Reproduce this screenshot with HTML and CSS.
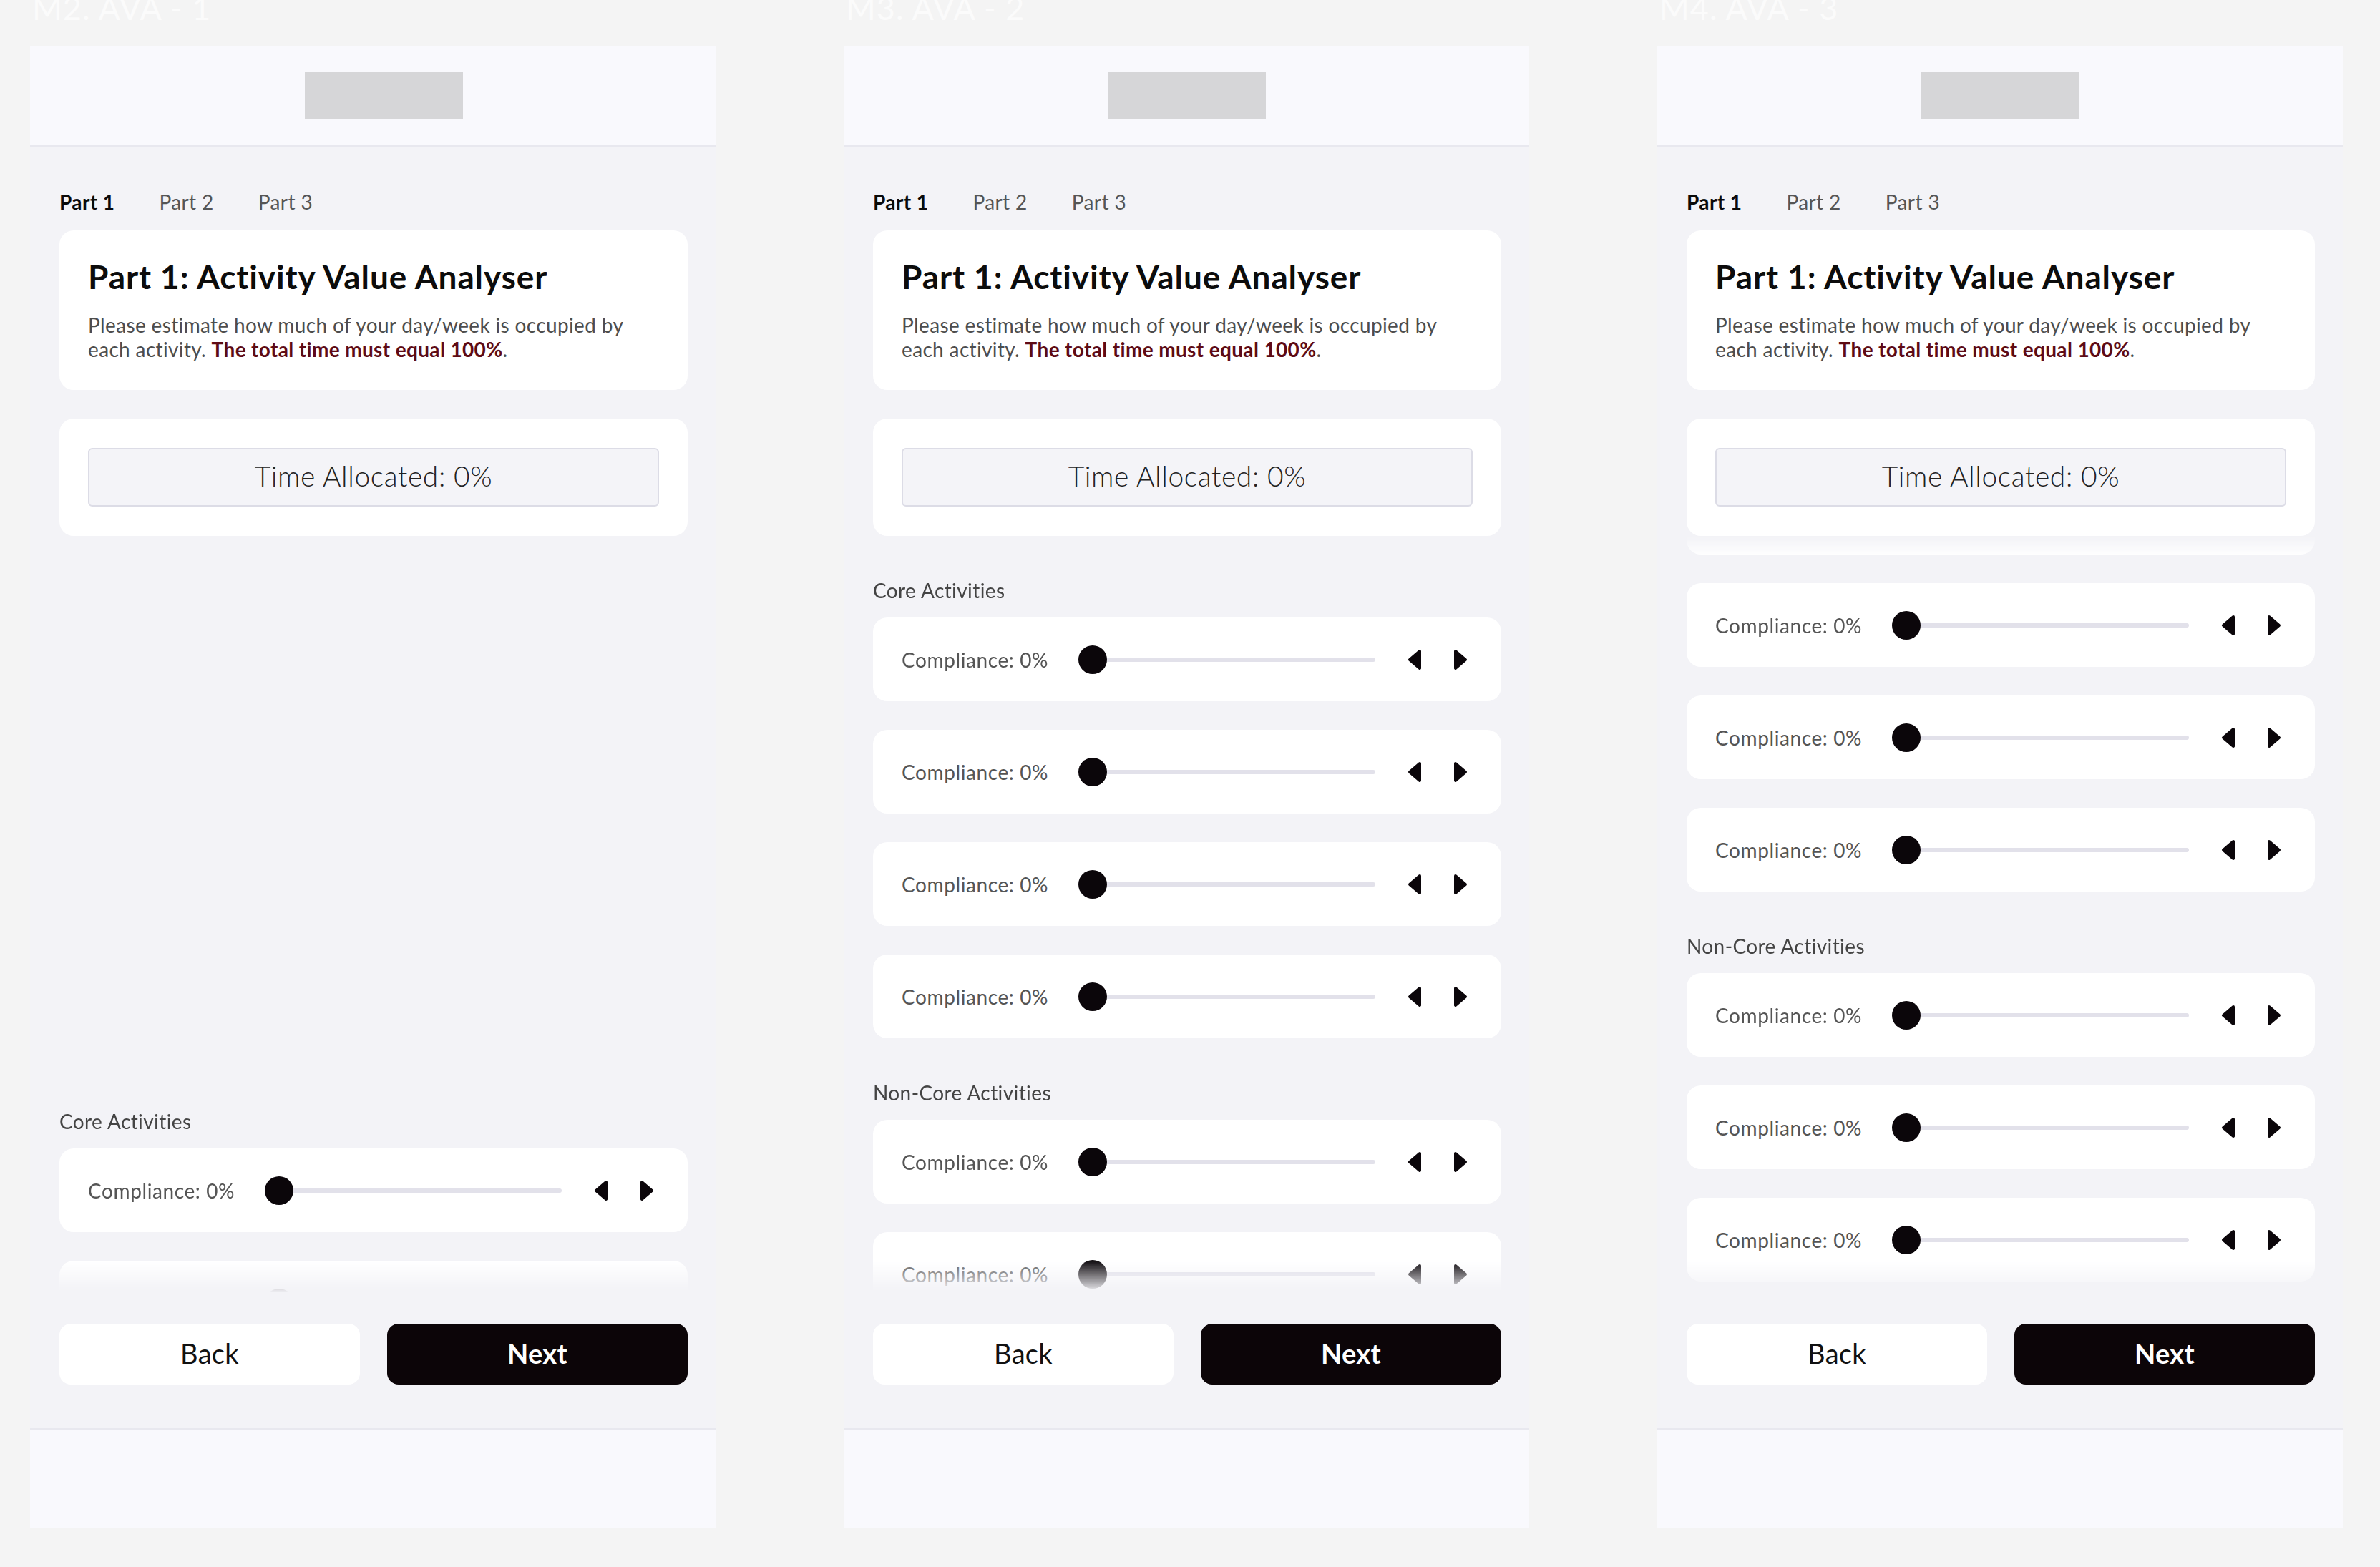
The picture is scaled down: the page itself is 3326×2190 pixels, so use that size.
FILE: index.html
```html
<!DOCTYPE html>
<html lang="en">
<head>
<meta charset="utf-8">
<title>Activity Value Analyser</title>
<link rel="stylesheet" href="styles.css">
</head>
<body>
<div class="board">

  <section class="artboard">
    <h2 class="artboard-title">M2. AVA - 1</h2>
    <div class="frame">
      <header class="frame-header is-offset"><div class="logo-placeholder"></div></header>
      <main class="frame-body">
        <nav class="tabs"><span class="tab is-active">Part 1</span><span class="tab">Part 2</span><span class="tab">Part 3</span></nav>
        <div class="card intro-card">
          <h1 class="card-title">Part 1: Activity Value Analyser</h1>
          <p class="card-desc">Please estimate how much of your day/week is occupied by each activity. <strong class="warn">The total time must equal 100%</strong>.</p>
        </div>
        <div class="card alloc-card"><div class="alloc">Time Allocated: 0%</div></div>
        <div class="list">
          <div class="list-inner is-entering">
            <div class="section">
              <div class="section-label">Core Activities</div>
              <div class="rows">
                <div class="row"><span class="row-label">Compliance: 0%</span><div class="slider"><div class="track"></div><div class="thumb"></div></div><div class="steppers"><button class="step"><svg viewBox="0 0 24 32"><path d="M19 4 L5 16 L19 28 Z"/></svg></button><button class="step"><svg viewBox="0 0 24 32"><path d="M5 4 L19 16 L5 28 Z"/></svg></button></div></div>
                <div class="row"><span class="row-label">Compliance: 0%</span><div class="slider"><div class="track"></div><div class="thumb"></div></div><div class="steppers"><button class="step"><svg viewBox="0 0 24 32"><path d="M19 4 L5 16 L19 28 Z"/></svg></button><button class="step"><svg viewBox="0 0 24 32"><path d="M5 4 L19 16 L5 28 Z"/></svg></button></div></div>
                <div class="row"><span class="row-label">Compliance: 0%</span><div class="slider"><div class="track"></div><div class="thumb"></div></div><div class="steppers"><button class="step"><svg viewBox="0 0 24 32"><path d="M19 4 L5 16 L19 28 Z"/></svg></button><button class="step"><svg viewBox="0 0 24 32"><path d="M5 4 L19 16 L5 28 Z"/></svg></button></div></div>
                <div class="row"><span class="row-label">Compliance: 0%</span><div class="slider"><div class="track"></div><div class="thumb"></div></div><div class="steppers"><button class="step"><svg viewBox="0 0 24 32"><path d="M19 4 L5 16 L19 28 Z"/></svg></button><button class="step"><svg viewBox="0 0 24 32"><path d="M5 4 L19 16 L5 28 Z"/></svg></button></div></div>
              </div>
            </div>
          </div>
        </div>
        <div class="actions"><button class="btn btn-back">Back</button><button class="btn btn-next">Next</button></div>
      </main>
      <footer class="frame-footer"></footer>
    </div>
  </section>

  <section class="artboard">
    <h2 class="artboard-title">M3. AVA - 2</h2>
    <div class="frame">
      <header class="frame-header"><div class="logo-placeholder"></div></header>
      <main class="frame-body">
        <nav class="tabs"><span class="tab is-active">Part 1</span><span class="tab">Part 2</span><span class="tab">Part 3</span></nav>
        <div class="card intro-card">
          <h1 class="card-title">Part 1: Activity Value Analyser</h1>
          <p class="card-desc">Please estimate how much of your day/week is occupied by each activity. <strong class="warn">The total time must equal 100%</strong>.</p>
        </div>
        <div class="card alloc-card"><div class="alloc">Time Allocated: 0%</div></div>
        <div class="list">
          <div class="list-inner">
            <div class="section">
              <div class="section-label">Core Activities</div>
              <div class="rows">
                <div class="row"><span class="row-label">Compliance: 0%</span><div class="slider"><div class="track"></div><div class="thumb"></div></div><div class="steppers"><button class="step"><svg viewBox="0 0 24 32"><path d="M19 4 L5 16 L19 28 Z"/></svg></button><button class="step"><svg viewBox="0 0 24 32"><path d="M5 4 L19 16 L5 28 Z"/></svg></button></div></div>
                <div class="row"><span class="row-label">Compliance: 0%</span><div class="slider"><div class="track"></div><div class="thumb"></div></div><div class="steppers"><button class="step"><svg viewBox="0 0 24 32"><path d="M19 4 L5 16 L19 28 Z"/></svg></button><button class="step"><svg viewBox="0 0 24 32"><path d="M5 4 L19 16 L5 28 Z"/></svg></button></div></div>
                <div class="row"><span class="row-label">Compliance: 0%</span><div class="slider"><div class="track"></div><div class="thumb"></div></div><div class="steppers"><button class="step"><svg viewBox="0 0 24 32"><path d="M19 4 L5 16 L19 28 Z"/></svg></button><button class="step"><svg viewBox="0 0 24 32"><path d="M5 4 L19 16 L5 28 Z"/></svg></button></div></div>
                <div class="row"><span class="row-label">Compliance: 0%</span><div class="slider"><div class="track"></div><div class="thumb"></div></div><div class="steppers"><button class="step"><svg viewBox="0 0 24 32"><path d="M19 4 L5 16 L19 28 Z"/></svg></button><button class="step"><svg viewBox="0 0 24 32"><path d="M5 4 L19 16 L5 28 Z"/></svg></button></div></div>
              </div>
            </div>
            <div class="section">
              <div class="section-label">Non-Core Activities</div>
              <div class="rows">
                <div class="row"><span class="row-label">Compliance: 0%</span><div class="slider"><div class="track"></div><div class="thumb"></div></div><div class="steppers"><button class="step"><svg viewBox="0 0 24 32"><path d="M19 4 L5 16 L19 28 Z"/></svg></button><button class="step"><svg viewBox="0 0 24 32"><path d="M5 4 L19 16 L5 28 Z"/></svg></button></div></div>
                <div class="row"><span class="row-label">Compliance: 0%</span><div class="slider"><div class="track"></div><div class="thumb"></div></div><div class="steppers"><button class="step"><svg viewBox="0 0 24 32"><path d="M19 4 L5 16 L19 28 Z"/></svg></button><button class="step"><svg viewBox="0 0 24 32"><path d="M5 4 L19 16 L5 28 Z"/></svg></button></div></div>
                <div class="row"><span class="row-label">Compliance: 0%</span><div class="slider"><div class="track"></div><div class="thumb"></div></div><div class="steppers"><button class="step"><svg viewBox="0 0 24 32"><path d="M19 4 L5 16 L19 28 Z"/></svg></button><button class="step"><svg viewBox="0 0 24 32"><path d="M5 4 L19 16 L5 28 Z"/></svg></button></div></div>
              </div>
            </div>
          </div>
        </div>
        <div class="actions"><button class="btn btn-back">Back</button><button class="btn btn-next">Next</button></div>
      </main>
      <footer class="frame-footer"></footer>
    </div>
  </section>

  <section class="artboard">
    <h2 class="artboard-title">M4. AVA - 3</h2>
    <div class="frame">
      <header class="frame-header"><div class="logo-placeholder"></div></header>
      <main class="frame-body">
        <nav class="tabs"><span class="tab is-active">Part 1</span><span class="tab">Part 2</span><span class="tab">Part 3</span></nav>
        <div class="card intro-card">
          <h1 class="card-title">Part 1: Activity Value Analyser</h1>
          <p class="card-desc">Please estimate how much of your day/week is occupied by each activity. <strong class="warn">The total time must equal 100%</strong>.</p>
        </div>
        <div class="card alloc-card"><div class="alloc">Time Allocated: 0%</div></div>
        <div class="list">
          <div class="list-inner is-scrolled">
            <div class="section">
              <div class="section-label">Core Activities</div>
              <div class="rows">
                <div class="row"><span class="row-label">Compliance: 0%</span><div class="slider"><div class="track"></div><div class="thumb"></div></div><div class="steppers"><button class="step"><svg viewBox="0 0 24 32"><path d="M19 4 L5 16 L19 28 Z"/></svg></button><button class="step"><svg viewBox="0 0 24 32"><path d="M5 4 L19 16 L5 28 Z"/></svg></button></div></div>
                <div class="row"><span class="row-label">Compliance: 0%</span><div class="slider"><div class="track"></div><div class="thumb"></div></div><div class="steppers"><button class="step"><svg viewBox="0 0 24 32"><path d="M19 4 L5 16 L19 28 Z"/></svg></button><button class="step"><svg viewBox="0 0 24 32"><path d="M5 4 L19 16 L5 28 Z"/></svg></button></div></div>
                <div class="row"><span class="row-label">Compliance: 0%</span><div class="slider"><div class="track"></div><div class="thumb"></div></div><div class="steppers"><button class="step"><svg viewBox="0 0 24 32"><path d="M19 4 L5 16 L19 28 Z"/></svg></button><button class="step"><svg viewBox="0 0 24 32"><path d="M5 4 L19 16 L5 28 Z"/></svg></button></div></div>
                <div class="row"><span class="row-label">Compliance: 0%</span><div class="slider"><div class="track"></div><div class="thumb"></div></div><div class="steppers"><button class="step"><svg viewBox="0 0 24 32"><path d="M19 4 L5 16 L19 28 Z"/></svg></button><button class="step"><svg viewBox="0 0 24 32"><path d="M5 4 L19 16 L5 28 Z"/></svg></button></div></div>
              </div>
            </div>
            <div class="section">
              <div class="section-label">Non-Core Activities</div>
              <div class="rows">
                <div class="row"><span class="row-label">Compliance: 0%</span><div class="slider"><div class="track"></div><div class="thumb"></div></div><div class="steppers"><button class="step"><svg viewBox="0 0 24 32"><path d="M19 4 L5 16 L19 28 Z"/></svg></button><button class="step"><svg viewBox="0 0 24 32"><path d="M5 4 L19 16 L5 28 Z"/></svg></button></div></div>
                <div class="row"><span class="row-label">Compliance: 0%</span><div class="slider"><div class="track"></div><div class="thumb"></div></div><div class="steppers"><button class="step"><svg viewBox="0 0 24 32"><path d="M19 4 L5 16 L19 28 Z"/></svg></button><button class="step"><svg viewBox="0 0 24 32"><path d="M5 4 L19 16 L5 28 Z"/></svg></button></div></div>
                <div class="row"><span class="row-label">Compliance: 0%</span><div class="slider"><div class="track"></div><div class="thumb"></div></div><div class="steppers"><button class="step"><svg viewBox="0 0 24 32"><path d="M19 4 L5 16 L19 28 Z"/></svg></button><button class="step"><svg viewBox="0 0 24 32"><path d="M5 4 L19 16 L5 28 Z"/></svg></button></div></div>
              </div>
            </div>
          </div>
        </div>
        <div class="actions"><button class="btn btn-back">Back</button><button class="btn btn-next">Next</button></div>
      </main>
      <footer class="frame-footer"></footer>
    </div>
  </section>

</div>
</body>
</html>
```

FILE: styles.css
```css
* { box-sizing: border-box; }

html, body {
  margin: 0;
  padding: 0;
}

body {
  background: #f4f4f4;
  font-family: Lato, "Liberation Sans", sans-serif;
  width: 3326px;
  height: 2190px;
  overflow: hidden;
}

.board {
  display: flex;
  gap: 179px;
  padding-left: 42px;
}

.artboard {
  width: 958px;
  display: flex;
  flex-direction: column;
  flex: none;
}

.artboard-title {
  height: 75px;
  margin: -11px 0 0;
  padding-left: 3px;
  font-size: 45px;
  line-height: 45px;
  font-weight: 400;
  letter-spacing: 1px;
  color: #fbfbfb;
}

.frame {
  height: 2072px;
  display: flex;
  flex-direction: column;
  background: #f3f3f7;
}

.frame-header {
  height: 142px;
  flex: none;
  background: #f9f9fd;
  border-bottom: 3px solid #e8e8ef;
  display: flex;
  align-items: center;
  justify-content: center;
}

.frame-header.is-offset { padding-left: 31px; }

.logo-placeholder {
  width: 221px;
  height: 65px;
  background: #d6d6d8;
}

.frame-body {
  flex: 1;
  min-height: 0;
  display: flex;
  flex-direction: column;
  padding: 59px 39px 61px 41px;
}

.tabs {
  display: flex;
  gap: 62px;
  height: 34px;
  font-size: 28px;
  line-height: 34px;
  letter-spacing: 0.4px;
  color: #555;
  flex: none;
}

.tab.is-active {
  color: #0a0a0a;
  font-weight: 700;
}

.card {
  background: #fff;
  border-radius: 20px;
  flex: none;
}

.intro-card {
  margin-top: 23px;
  padding: 40px;
}

.card-title {
  margin: 0;
  font-size: 46px;
  line-height: 50px;
  font-weight: 700;
  letter-spacing: 0.9px;
  color: #0c0c0c;
}

.card-desc {
  margin: 25px 0 0;
  font-size: 28px;
  line-height: 34px;
  letter-spacing: 0.35px;
  color: #4d4d4d;
}

.warn {
  color: #5e0b15;
  font-weight: 700;
}

.alloc-card {
  margin-top: 40px;
  padding: 41px 40px;
}

.alloc {
  height: 82px;
  border: 2px solid #dcdce6;
  background: #f4f4f8;
  border-radius: 6px;
  display: flex;
  align-items: center;
  justify-content: center;
  padding-bottom: 4px;
  font-size: 39px;
  font-weight: 300;
  letter-spacing: 0.6px;
  color: #222;
}

.list {
  flex: 1;
  min-height: 0;
  overflow: hidden;
  -webkit-mask-image: linear-gradient(to bottom, transparent 0, #000 30px, #000 calc(100% - 45px), transparent 100%);
  mask-image: linear-gradient(to bottom, transparent 0, #000 30px, #000 calc(100% - 45px), transparent 100%);
}

.list-inner.is-entering { padding-top: 742px; }
.list-inner.is-scrolled { margin-top: -205px; }

.section { padding-top: 59px; }

.section-label {
  font-size: 28px;
  line-height: 34px;
  letter-spacing: 0.4px;
  color: #444;
  margin-bottom: 21px;
}

.rows {
  display: flex;
  flex-direction: column;
  gap: 40px;
}

.row {
  height: 117px;
  background: #fff;
  border-radius: 20px;
  display: flex;
  align-items: center;
  padding: 0 45px 0 40px;
}

.row-label {
  width: 208px;
  flex: none;
  white-space: nowrap;
  font-size: 28px;
  letter-spacing: 0.6px;
  color: #555;
}

.slider {
  position: relative;
  flex: none;
  width: 415px;
  height: 40px;
  margin-left: 39px;
  display: flex;
  align-items: center;
}

.track {
  width: 100%;
  height: 6px;
  border-radius: 3px;
  background: #e2e1ea;
}

.thumb {
  position: absolute;
  left: 0;
  top: 0;
  width: 40px;
  height: 40px;
  border-radius: 50%;
  background: #0b060a;
}

.steppers {
  display: flex;
  gap: 40px;
  margin-left: 43px;
}

.step {
  width: 24px;
  height: 32px;
  padding: 0;
  border: 0;
  background: none;
  display: flex;
}

.step svg {
  width: 24px;
  height: 32px;
}

.step path {
  fill: #0b060a;
  stroke: #0b060a;
  stroke-width: 4;
  stroke-linejoin: round;
}

.actions {
  display: flex;
  gap: 38px;
  margin-top: 44px;
  flex: none;
}

.btn {
  flex: 1;
  height: 85px;
  border: 0;
  border-radius: 16px;
  padding-bottom: 4px;
  font-family: inherit;
  font-size: 38px;
  letter-spacing: 0.3px;
}

.btn-back {
  background: #fff;
  color: #111;
}

.btn-next {
  background: #0c0508;
  color: #fff;
  font-weight: 700;
}

.frame-footer {
  height: 140px;
  flex: none;
  background: #f9f9fd;
  border-top: 3px solid #e8e8ef;
}
```
